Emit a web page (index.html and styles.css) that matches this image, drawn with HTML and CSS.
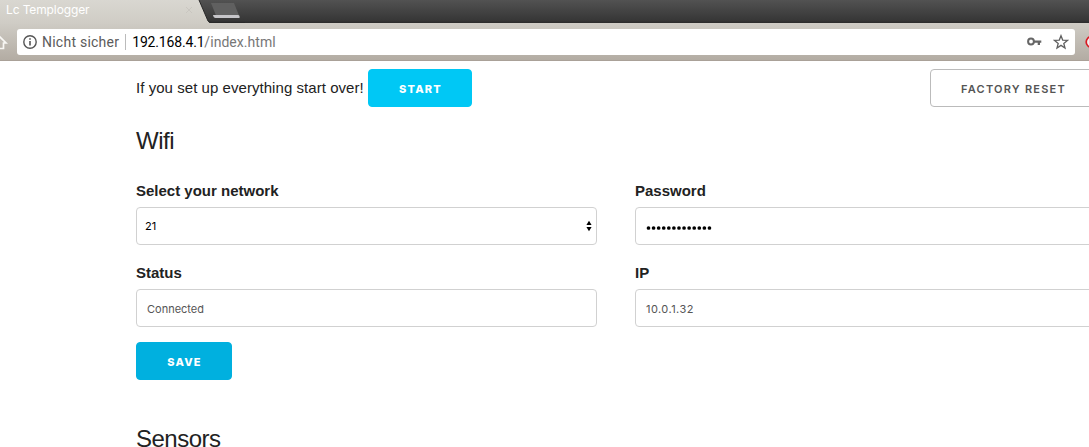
FILE: index.html
```html
<!DOCTYPE html>
<html lang="en">
<head>
<meta charset="utf-8">
<title>Lc Templogger</title>
<link rel="stylesheet" href="styles.css">
</head>
<body>
<header class="browser">
  <div class="tabstrip">
    <svg class="tab-shape" width="245" height="24" viewBox="0 0 245 24">
      <defs><linearGradient id="tab" x1="0" y1="0" x2="0" y2="1"><stop offset="0" stop-color="#d9d7d1"/><stop offset="1" stop-color="#cfccc5"/></linearGradient></defs>
      <path d="M0 0H199L208 21Q209 23 211 24H0Z" fill="url(#tab)"/>
      <path d="M199 0L208 21Q209 22.500 212 22.500H245" fill="none" stroke="#292929"/>
      <path d="M211 3H234L239 15.500H216Z" fill="#606060"/>
      <path d="M213 15H238Q240 15 239.500 18H215.500Q213.500 18 213 15Z" fill="#c6c5c9"/>
      <path d="M186 7l6 6m0-6l-6 6" stroke="#c9c6c0" stroke-width="1"/>
    </svg>
    <span class="tab-title">Lc Templogger</span>
  </div>
  <div class="toolbar">
    <svg class="home" width="8" height="18" viewBox="0 0 8 18"><path d="M-7 10L-.5 3.500L6 10H3.500V15.500H-3" fill="none" stroke="#f8f7f4" stroke-width="1.700"/></svg>
    <div class="address">
      <svg width="14" height="14" viewBox="0 0 14 14"><circle cx="7" cy="7" r="6.200" fill="none" stroke="#555" stroke-width="1.400"/><path d="M7 6v4.600M7 3.300v1.500" stroke="#555" stroke-width="1.600"/></svg>
      <span class="insecure">Nicht sicher</span>
      <span class="divider"></span>
      <span class="host">192.168.4.1</span><span class="path">/index.html</span>
      <svg class="key" width="15" height="10" viewBox="0 0 15 10"><circle cx="4" cy="4.500" r="2.900" fill="none" stroke="#666" stroke-width="2"/><path d="M7 3.500H14.300V5.700H13V8H10.700V5.700H7Z" fill="#666"/></svg>
      <svg class="star" width="16" height="16" viewBox="0 0 16 16"><path d="M8 1.700L9.700 6.100L14.400 6.400L10.800 9.400L12 14L8 11.400L4 14L5.200 9.400L1.600 6.400L6.300 6.100Z" fill="none" stroke="#606060" stroke-width="1.300"/></svg>
    </div>
    <svg class="blocker" width="4" height="14" viewBox="0 0 4 14"><circle cx="6.500" cy="7" r="5.300" fill="#f3eeee" stroke="#d91822" stroke-width="1.700"/></svg>
  </div>
</header>
<main>
  <div class="actions">
    <p>If you set up everything start over!</p>
    <button class="button start">START</button>
    <button class="button reset">FACTORY RESET</button>
  </div>
  <h5 class="wifi">Wifi</h5>
  <form class="fields">
    <div><label>Select your network</label>
      <div class="field select"><span>21</span><svg width="6" height="12" viewBox="0 0 6 12"><path d="M.4 5L3 .8L5.600 5ZM.4 7L3 11.200L5.600 7Z" fill="#000"/></svg></div></div>
    <div><label>Password</label>
      <div class="field password"><svg width="66" height="6" viewBox="0 0 66 6"><path d="M2.500 3H64.500" stroke="#000" stroke-width="3.700" stroke-linecap="round" stroke-dasharray="0 5.080"/></svg></div></div>
    <div><label>Status</label><div class="field status">Connected</div></div>
    <div><label>IP</label><div class="field ip">10.0.1.32</div></div>
  </form>
  <button class="button save">SAVE</button>
  <h5 class="sensors">Sensors</h5>
</main>
</body>
</html>
```
FILE: styles.css
```css
* { box-sizing: border-box; }
body { margin: 0; width: 1089px; height: 447px; overflow: hidden; background: #fff; color: #222; font-family: "Liberation Sans", Arial, sans-serif; }
.browser { height: 61px; }
.tabstrip { position: relative; height: 23px; background: linear-gradient(#525252, #363636 90%, #2b2b2b); }
.tab-shape { display: block; }
.tab-title { position: absolute; left: 6px; top: 2px; font: 12px/16px Inter, sans-serif; color: #fff; letter-spacing: -.12px; }
.toolbar { height: 38px; display: flex; align-items: flex-start; padding-top: 6px; background: linear-gradient(#cfccc5, #b3aca3); border-bottom: 1px solid #aaa198; }
.home { margin: 4px 9px 0 0; }
.address { width: 1058px; height: 26px; display: flex; align-items: center; padding: 0 6px; background: #fff; border-radius: 3px; font: 14px/20px Roboto, sans-serif; white-space: nowrap; }
.insecure { margin-left: 5px; color: #5b5b5b; letter-spacing: .24px; }
.divider { width: 1px; height: 16px; margin: 0 6px; background: #bbb; }
.host { color: #000; letter-spacing: -.17px; }
.path { color: #777; letter-spacing: .05px; }
.key { margin-left: auto; margin-right: -1px; }
.star { margin: 0 0 0 12px; }
.blocker { margin: 6px 0 0 10px; }
main { padding: 8px 0 0 136px; }
.actions { height: 38px; width: 960px; display: flex; align-items: center; }
.actions p { margin: 0; width: 232px; font-size: 15px; line-height: 24px; white-space: nowrap; letter-spacing: .05px; }
.button { height: 38px; padding: 1px 0 0 1px; border: 1px solid #bbb; border-radius: 4px; background: #fff; color: #555; font: 600 11px/36px Inter, sans-serif; letter-spacing: 1.22px; white-space: nowrap; }
.start { width: 104px; border-color: #00c8f5; background: #00c8f5; color: #fff; font-weight: 800; }
.reset { width: 166px; margin-left: auto; flex: none; }
.save { display: block; width: 96px; margin-top: 15px; border-color: #00b0df; background: #00b0df; color: #fff; font-weight: 800; }
h5 { margin: 0; font-size: 24px; line-height: 36px; font-weight: 400; letter-spacing: -.5px; }
.wifi { margin-top: 16px; }
.sensors { margin-top: 41px; }
.fields { display: grid; grid-template-columns: 461px 485px; column-gap: 38px; row-gap: 16px; margin-top: 20px; }
label { display: block; height: 28px; font-size: 15px; line-height: 24px; font-weight: 700; }
.field { height: 38px; display: flex; align-items: center; border: 1px solid #d1d1d1; border-radius: 4px; background: #fff; padding: 2px 10px 0; color: #555; font: 11px/16px Inter, sans-serif; }
.select { padding: 0 4px 0 8px; justify-content: space-between; color: #000; }
.password { padding-top: 3px; }
.ip { letter-spacing: .45px; }
```
